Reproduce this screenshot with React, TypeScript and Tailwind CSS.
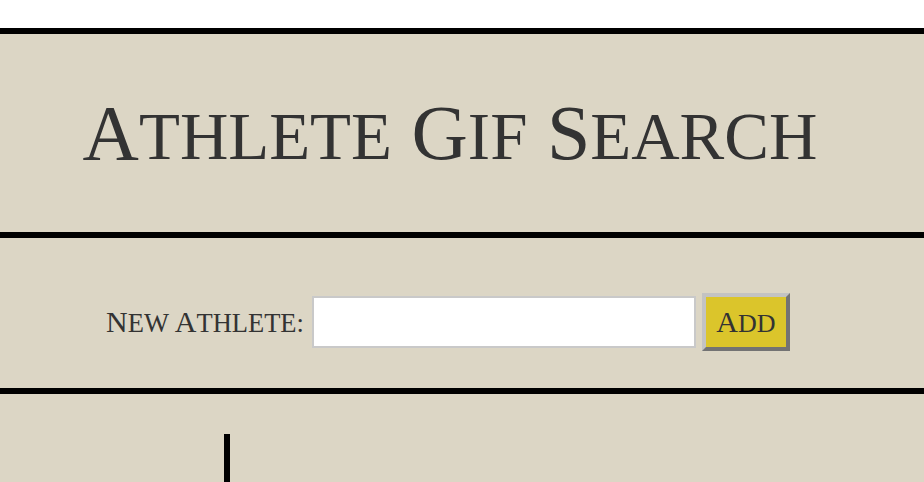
import React from "react";

function Caps({ text, big, small }: { text: string; big: string; small: string }) {
  // fake small caps: first letter of each word larger
  const words = text.split(" ");
  return (
    <>
      {words.map((w, i) => (
        <React.Fragment key={i}>
          <span className={big}>
            {i > 0 && " "}
            {w[0].toUpperCase()}
          </span>
          <span className={small}>{w.slice(1).toUpperCase()}</span>
        </React.Fragment>
      ))}
    </>
  );
}

export default function App() {
  return (
    <div className="min-h-[482px] bg-white pt-[28px] font-['Liberation_Serif',serif] text-[#333]">
      <header className="flex h-[210px] items-center justify-center border-y-[6px] border-black bg-[#dcd6c5] pr-[24px]">
        <h1 className="leading-none">
          <Caps text="Athlete Gif Search" big="text-[78px]" small="text-[67px]" />
        </h1>
      </header>
      <form
        className="flex h-[150px] items-center justify-center gap-2 bg-[#dcd6c5] pr-[28px] pt-[18px]"
        onSubmit={(e) => e.preventDefault()}
      >
        <label className="leading-none">
          <Caps text="New Athlete:" big="text-[30px]" small="text-[26.5px]" />
        </label>
        <input
          type="text"
          className="h-[52px] w-[384px] border-2 border-[#c9c9c9] bg-white px-2 outline-none"
        />
        <button
          type="submit"
          className="-ml-[2px] h-[58px] w-[88px] border-4 border-t-[#c3c3c3] border-l-[#c3c3c3] border-r-[#737373] border-b-[#737373] bg-[#dbc52b] leading-none"
        >
          <Caps text="Add" big="text-[30px]" small="text-[26px]" />
        </button>
      </form>
      <div className="flex h-[100px] border-t-[6px] border-black bg-[#dcd6c5]">
        <aside className="mt-[40px] w-[230px] border-r-[6px] border-black" />
        <main className="flex-1" />
      </div>
    </div>
  );
}
